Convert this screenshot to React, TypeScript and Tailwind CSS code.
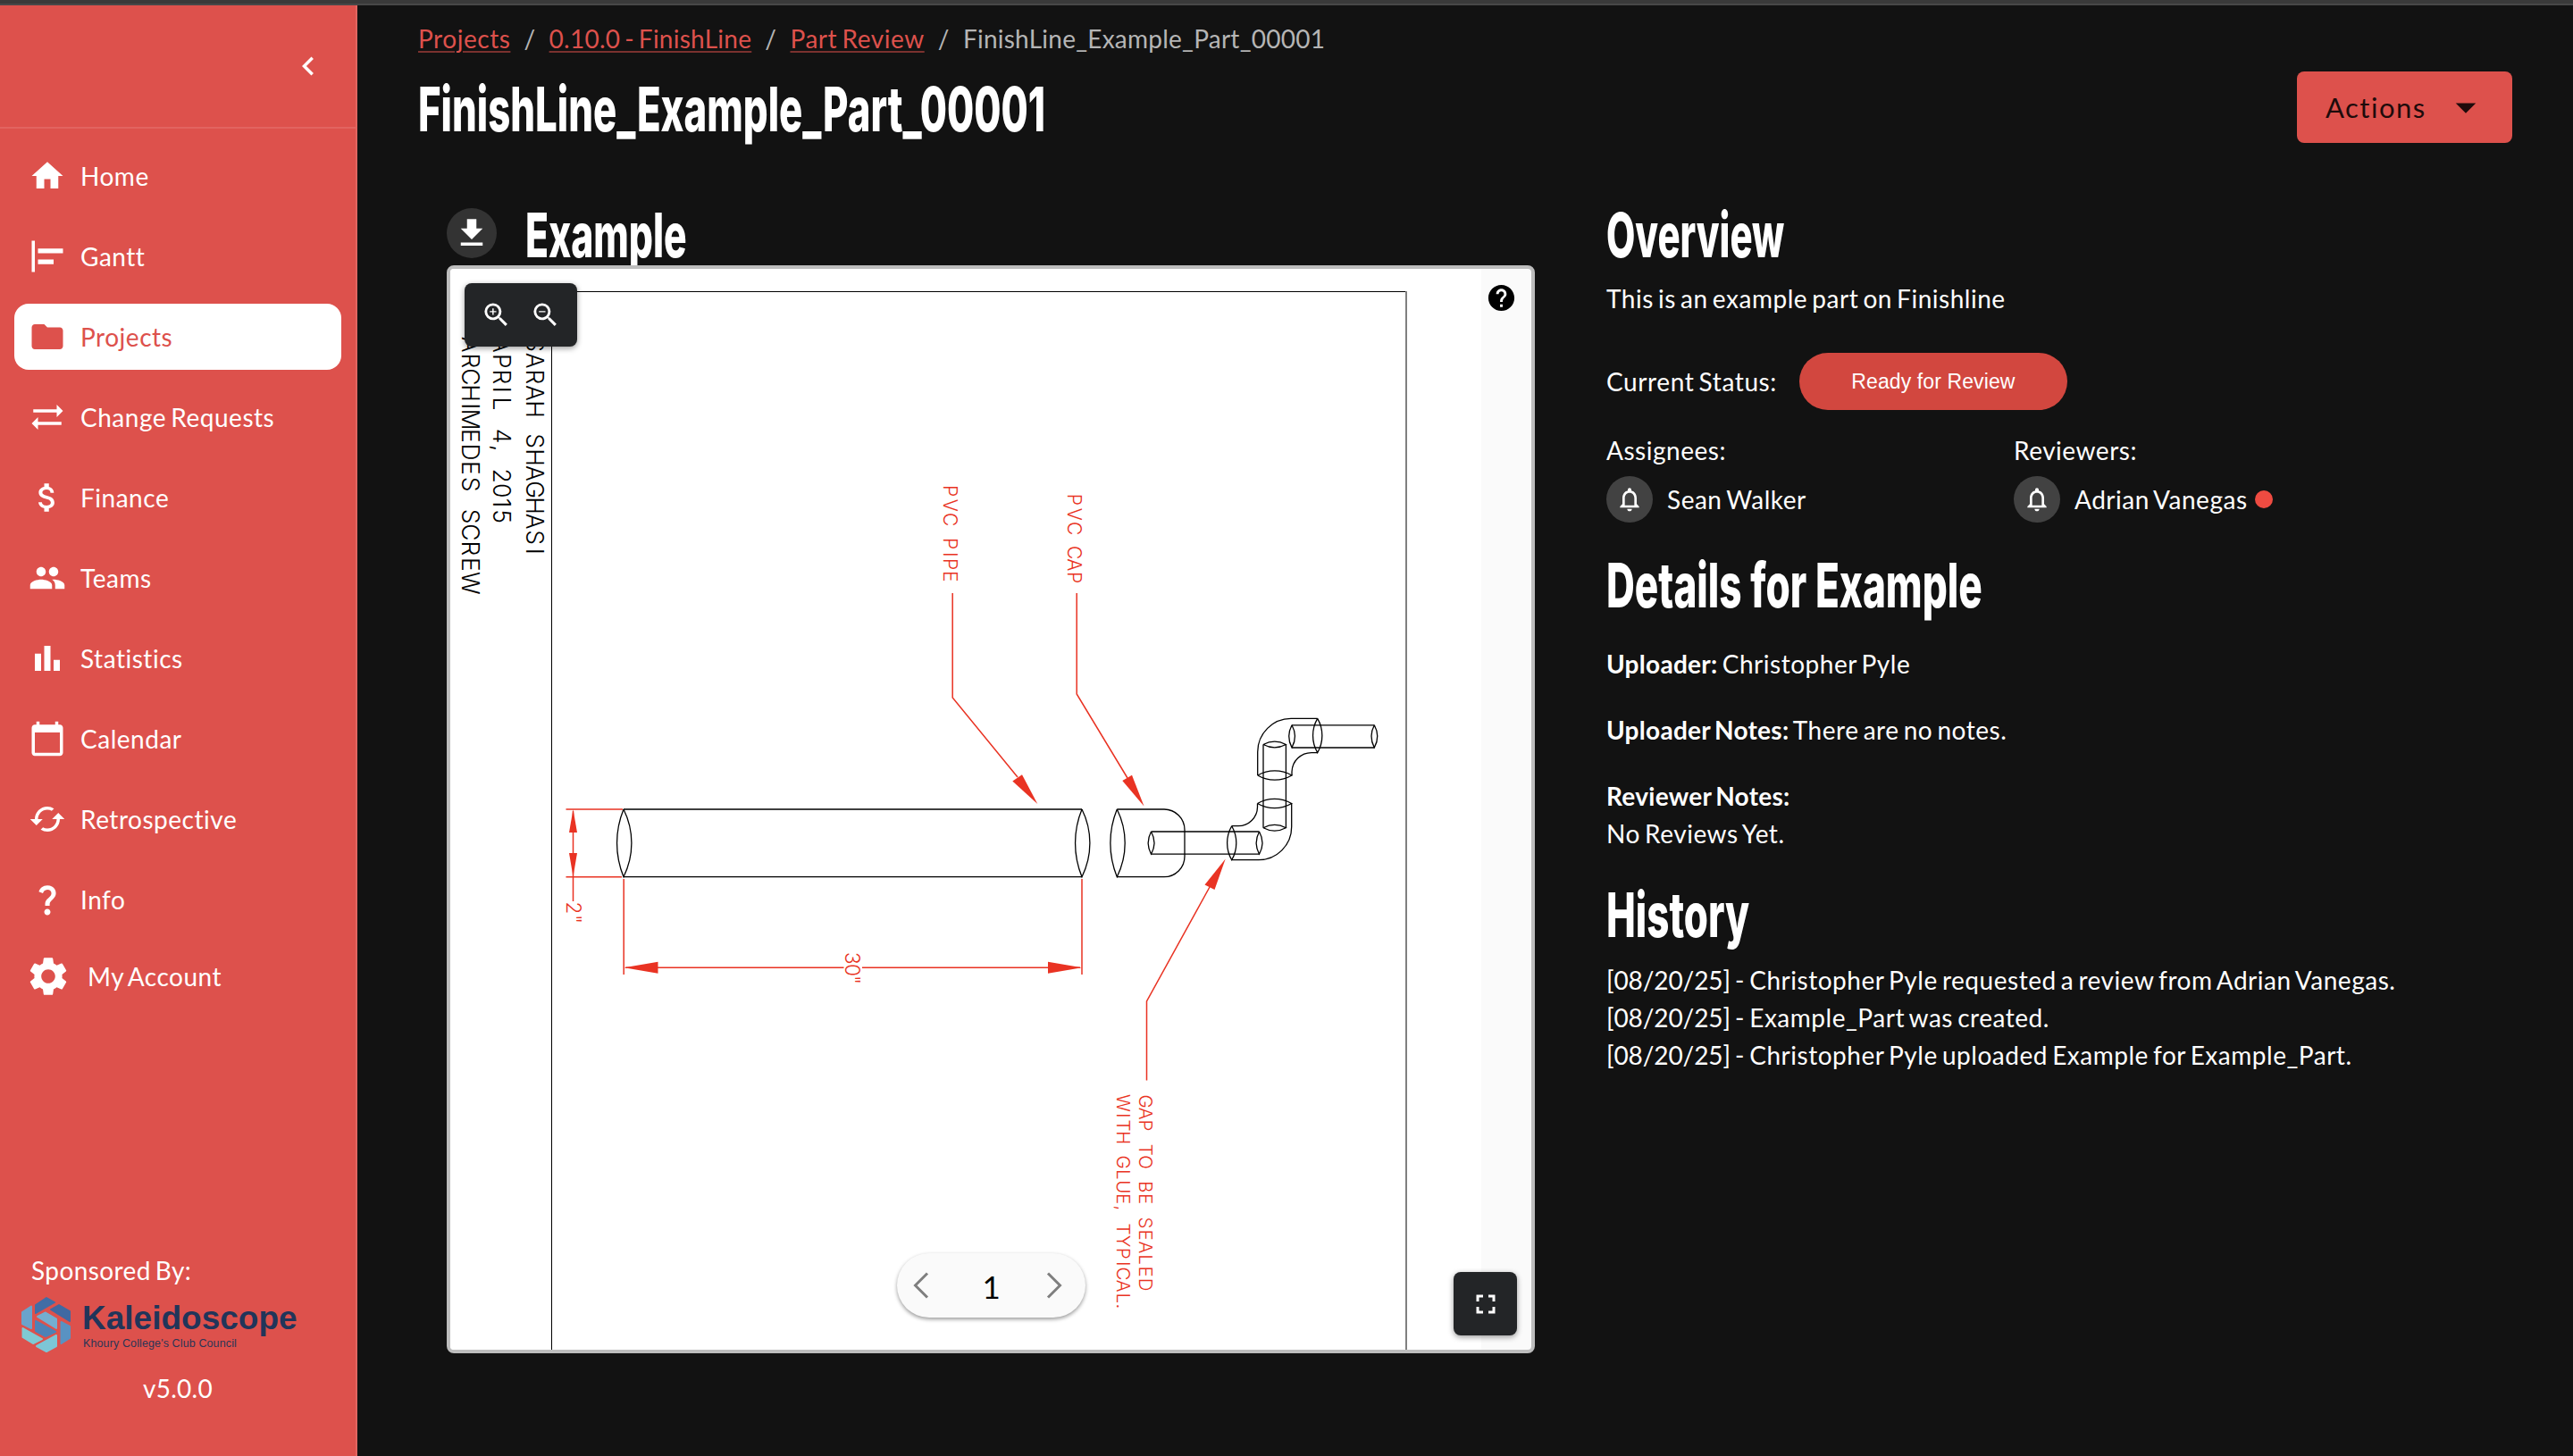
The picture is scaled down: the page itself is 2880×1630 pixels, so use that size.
import React from 'react';
import {
  MdAlignHorizontalLeft,
  MdArrowDropDown,
  MdAttachMoney,
  MdBarChart,
  MdCached,
  MdCalendarToday,
  MdChevronLeft,
  MdDownload,
  MdFolder,
  MdFullscreen,
  MdGroup,
  MdHelp,
  MdHome,
  MdNotificationsNone,
  MdQuestionMark,
  MdSettings,
  MdSyncAlt,
  MdZoomIn,
  MdZoomOut,
} from 'react-icons/md';
import type { IconType } from 'react-icons';

const navItems: { label: string; Icon: IconType; active?: boolean }[] = [
  { label: 'Home', Icon: MdHome },
  { label: 'Gantt', Icon: MdAlignHorizontalLeft },
  { label: 'Projects', Icon: MdFolder, active: true },
  { label: 'Change Requests', Icon: MdSyncAlt },
  { label: 'Finance', Icon: MdAttachMoney },
  { label: 'Teams', Icon: MdGroup },
  { label: 'Statistics', Icon: MdBarChart },
  { label: 'Calendar', Icon: MdCalendarToday },
  { label: 'Retrospective', Icon: MdCached },
  { label: 'Info', Icon: MdQuestionMark },
];

function KaleidoscopeLogo() {
  return (
    <div className="flex h-[72px] pl-[22px] tracking-normal whitespace-nowrap [word-spacing:0px]">
      <svg className="block h-[72px] w-[60px] shrink-0" viewBox="22 1446 60 72">
        <g strokeLinejoin="round" strokeWidth="2">
          <path d="M40 1460 L52 1452 L61 1457 L40 1469 Z" fill="#416da6" stroke="#416da6" />
          <path d="M57 1465 L66 1460 L78 1467 L78 1478 Z" fill="#4069a2" stroke="#4069a2" />
          <path d="M25 1468 L35 1461.500 L35 1486 L25 1481 Z" fill="#6ba3cb" stroke="#6ba3cb" />
          <path d="M42 1473 L51 1468.500 L63 1475.500 L63 1486 Z" fill="#74aed0" stroke="#74aed0" />
          <path d="M40 1478 L62 1490 L51 1495 L40 1489 Z" fill="#4d82b7" stroke="#4d82b7" />
          <path d="M68.500 1479 L78 1484 L78 1497 L68.500 1503 Z" fill="#5992c2" stroke="#5992c2" />
          <path d="M25.500 1486 L47 1498 L37 1503 L25.500 1496 Z" fill="#7fcad4" stroke="#7fcad4" />
          <path d="M41 1506 L63 1494 L63 1506 L52 1512 Z" fill="#7dc6d6" stroke="#7dc6d6" />
        </g>
      </svg>
      <div className="ml-[9px] flex flex-col pt-[8px] font-['Liberation_Sans',sans-serif]">
        <span className="pl-px text-[37px] leading-[42px] font-bold text-[#21355a]">Kaleidoscope</span>
        <span className="pl-[2px] text-[12.5px] leading-[14px] tracking-[0.12px] text-[#2b3556]">
          Khoury College's Club Council
        </span>
      </div>
    </div>
  );
}

function Sidebar() {
  return (
    <aside className="flex w-[400px] shrink-0 flex-col border-r-2 border-[#e26460] bg-[#dd514c] text-white">
      <div className="flex h-[138px] items-center justify-end border-b-2 border-[#e26460] pr-8">
        <MdChevronLeft className="size-[42px]" />
      </div>
      <nav className="flex flex-col gap-4 px-4 pt-4">
        {navItems.map(({ label, Icon, active }) => (
          <div
            key={label}
            className={
              active
                ? 'flex h-[74px] items-center gap-4 rounded-[16px] bg-white pl-4 text-[#dd514c]'
                : 'flex h-[74px] items-center gap-4 pl-4'
            }
          >
            <Icon className="size-[42px]" />
            <span>{label}</span>
          </div>
        ))}
        <div className="-mt-[4px] flex h-[74px] items-center gap-[18px] pl-3">
          <MdSettings className="size-[52px]" />
          <span>My Account</span>
        </div>
      </nav>
      <div className="mt-auto flex flex-col pb-[55px]">
        <div className="pl-[35px] tracking-[0.4px]">Sponsored By:</div>
        <div className="mt-1">
          <KaleidoscopeLogo />
        </div>
        <div className="mt-[14px] text-center tracking-[0.26px]">v5.0.0</div>
      </div>
    </aside>
  );
}

type Lettering = { text: string; x: number; ys: number[]; size: number; color: string };

const BLACK = '#000000';
const RED = '#e93323';

/* Drafting labels: one entry per line, with the centre of every letter along the sheet. */
const lettering: Lettering[] = [
  { text: 'SARAHSHAGHASI', x: 589, size: 26.5, color: BLACK, ys: [385.7, 403.7, 422, 440, 458, 493.7, 512, 530, 548, 566, 583.7, 601.7, 617.3] },
  { text: 'APRIL4,2015', x: 552, size: 26.5, color: BLACK, ys: [386, 404.3, 422, 436.3, 452, 488, 501.7, 532.7, 549.3, 563, 578] },
  { text: 'ARCHIMEDESSCREW', x: 517, size: 26.5, color: BLACK, ys: [385.7, 404, 422, 440, 454.7, 469.7, 488, 506, 524, 542, 578, 596, 614, 632, 652.7] },
  { text: 'PVCPIPE', x: 1055.7, size: 21, color: RED, ys: [549.7, 565.7, 581.7, 608.7, 620.7, 631.7, 645.3] },
  { text: 'PVCCAP', x: 1195, size: 21, color: RED, ys: [559.3, 575.7, 591.7, 618.7, 632.3, 646.7] },
  { text: 'GAPTOBESEALED', x: 1275, size: 20.5, color: RED, ys: [1233, 1246.7, 1260, 1287.3, 1301, 1328.7, 1342, 1369, 1382.7, 1396.3, 1410, 1423.7, 1438] },
  { text: 'WITHGLUE,TYPICAL.', x: 1250, size: 20.5, color: RED, ys: [1235, 1248.7, 1260, 1273.7, 1301, 1314.7, 1328.7, 1342, 1352.3, 1376, 1389.7, 1403.3, 1414.7, 1426, 1439.7, 1453.3, 1462.3] },
  { text: '2"', x: 633.5, size: 22.5, color: RED, ys: [1016.3, 1029] },
  { text: '30"', x: 946, size: 22.5, color: RED, ys: [1072.7, 1086, 1097] },
];

function Drawing() {
  return (
    <svg className="block h-[1210px] w-[1154px] bg-white" viewBox="504 301 1154 1210" fill="none">
      <path d="M617.500 1511 V326.500 H1574" stroke="#000" strokeWidth="1" />
      <path d="M1574 326 V1511" stroke="#808080" strokeWidth="2" />

      {lettering.map((l) => (
        <g key={l.text} transform={`translate(${l.x} 0) rotate(90)`}>
          <text
            x={l.ys.join(' ')}
            y="0"
            textAnchor="middle"
            fill={l.color}
            style={{ fontSize: l.size }}
            className="font-['Inter',sans-serif] font-light tracking-normal"
          >
            {l.text}
          </text>
        </g>
      ))}

      <g stroke="#000" strokeWidth="1.3">
        <path d="M698 906 H1211 M698 981.700 H1211" />
        <path d="M698 906 A100 100 0 0 0 698 981.700 A85 85 0 0 0 698 906" />
        <path d="M1211 906 A100 100 0 0 0 1211 981.700 A85 85 0 0 0 1211 906" />
        <path d="M1250.300 906 A100 100 0 0 0 1250.300 981.700 A85 85 0 0 0 1250.300 906" />
        <path d="M1250.300 906 H1303 A23 23 0 0 1 1326 929 V958.700 A23 23 0 0 1 1303 981.700 H1250.300" />
        <path d="M1288.500 931 H1409.500 M1288.500 956.200 H1409.500" />
        <path d="M1288.500 931 A27 27 0 0 0 1288.500 956.200 A26 26 0 0 0 1288.500 931" />
        <path d="M1409.500 931 A27 27 0 0 0 1409.500 956.200 A26 26 0 0 0 1409.500 931" />
        <path d="M1378.700 924.700 A38 38 0 0 0 1378.700 962.700 A38 38 0 0 0 1378.700 924.700" />
        <path d="M1378.700 924.700 H1386 A21.500 21.500 0 0 0 1407.500 903.500 V899.500" />
        <path d="M1445.700 899.500 V925.500 A37 37 0 0 1 1408.500 962.700 H1378.700" />
        <path d="M1407.500 899.500 A38 38 0 0 1 1445.700 899.500 A38 38 0 0 1 1407.500 899.500" />
        <path d="M1414 833.500 V926.700 M1439.400 833.500 V926.700" />
        <path d="M1414 833.500 A27 27 0 0 1 1439.400 833.500 A27 27 0 0 1 1414 833.500" />
        <path d="M1414 926.700 A27 27 0 0 1 1439.400 926.700 A27 27 0 0 1 1414 926.700" />
        <path d="M1407.700 868 A38 38 0 0 1 1446 868 A38 38 0 0 1 1407.700 868" />
        <path d="M1407.700 868 V841.700 A37.500 37.500 0 0 1 1445 804.400 H1474.700" />
        <path d="M1474.700 804.400 A38 38 0 0 0 1474.700 842.600 A38 38 0 0 0 1474.700 804.400" />
        <path d="M1474.700 842.600 H1468 A22 22 0 0 0 1446 864 V868" />
        <path d="M1446 811.800 H1538.300 M1446 837 H1538.300" />
        <path d="M1446 811.800 A27 27 0 0 0 1446 837 A26 26 0 0 0 1446 811.800" />
        <path d="M1538.300 811.800 A27 27 0 0 0 1538.300 837 A26 26 0 0 0 1538.300 811.800" />
      </g>

      <g stroke={RED} strokeWidth="1.5">
        <path d="M1066.200 664 V781 L1139 870" />
        <path d="M1205.200 664 V777 L1262 871" />
        <path d="M1283.500 1209.500 V1121 L1354 993" />
        <path d="M633.500 906 H697 M633.500 981.700 H696 M641.500 908 V1009" />
        <path d="M698.200 984 V1091 M1211 984 V1091" />
        <path d="M700 1083.300 H944.500 M965 1083.300 H1209" />
      </g>
      <g fill={RED}>
        <path d="M1161.300 900 L1133.300 874.500 L1144 867.300 Z" />
        <path d="M1280.500 902.500 L1256.300 874 L1267 867.800 Z" />
        <path d="M1371.700 961.500 L1348.500 990.500 L1359.500 996 Z" />
        <path d="M641.500 906 L637 932 H646 Z" />
        <path d="M641.500 981.500 L637 955 H646 Z" />
        <path d="M698.500 1083.300 L736.500 1076.800 V1089.800 Z" />
        <path d="M1211 1083.300 L1173 1076.800 V1089.800 Z" />
      </g>
    </svg>
  );
}

function Viewer() {
  return (
    <div className="relative z-10 h-[1218px] w-[1218px] overflow-hidden rounded-lg border-4 border-[#bdbdbd] bg-[#fafafa]">
      <Drawing />
      <div className="absolute top-4 left-4 flex h-[71px] w-[126px] items-center gap-5 rounded-lg bg-[#232527] pl-[18px] text-white shadow-[0_2px_6px_rgba(0,0,0,0.4)]">
        <MdZoomIn className="size-[35px]" />
        <MdZoomOut className="size-[35px]" />
      </div>
      <MdHelp className="absolute top-[15px] right-4 size-[35px] text-black" />
      <div className="absolute right-4 bottom-4 flex size-[71px] items-center justify-center rounded-lg bg-[#232527] text-white shadow-[0_2px_6px_rgba(0,0,0,0.4)]">
        <MdFullscreen className="size-[36px]" />
      </div>
      <div className="absolute bottom-9 left-[500px] flex h-[72px] w-[211px] items-center rounded-[36px] bg-[#fafafa] pr-[25px] pl-[17px] text-[35px] text-black shadow-[0_2px_4px_rgba(0,0,0,0.4)]">
        <svg className="h-[32px] w-[20px]" viewBox="0 0 20 32" fill="none" stroke="#7f7f7f" strokeWidth="3">
          <path d="M17 2.500 L3.500 16 L17 29.500" />
        </svg>
        <span className="flex-1 pt-[2px] pl-[9px] text-center">1</span>
        <svg className="h-[32px] w-[20px]" viewBox="0 0 20 32" fill="none" stroke="#7f7f7f" strokeWidth="3">
          <path d="M3 2.500 L16.500 16 L3 29.500" />
        </svg>
      </div>
    </div>
  );
}

function Heading({ children, stretch }: { children: string; stretch: string }) {
  return (
    <h2
      className={`origin-left font-['Inter',sans-serif] text-[69px] leading-[72px] font-extrabold tracking-normal whitespace-nowrap [word-spacing:0px] ${stretch}`}
    >
      {children}
    </h2>
  );
}

function Person({ role, name, dot }: { role: string; name: string; dot?: boolean }) {
  return (
    <div className="w-[456px]">
      <div>{role}</div>
      <div className="mt-2 flex h-[52px] items-center">
        <span className="flex size-[52px] items-center justify-center rounded-full bg-[#424242]">
          <MdNotificationsNone className="size-[32px]" />
        </span>
        <span className="ml-4">{name}</span>
        {dot && <span className="ml-2 size-5 rounded-full bg-[#ee4b41]" />}
      </div>
    </div>
  );
}

const crumbs = [
  { label: 'Projects', tracking: 'tracking-[0.54px]' },
  { label: '0.10.0 - FinishLine', tracking: 'tracking-[0.26px]' },
  { label: 'Part Review', tracking: 'tracking-[0.56px]' },
];

const history = [
  'Christopher Pyle requested a review from Adrian Vanegas.',
  'Example_Part was created.',
  'Christopher Pyle uploaded Example for Example_Part.',
];

export default function App() {
  return (
    <div className="flex h-[1630px] w-[2880px] flex-col overflow-hidden bg-[#121212] font-['Lato',sans-serif] text-[28px] leading-[42px] tracking-[0.52px] text-white [word-spacing:-2.5px]">
      <div className="h-[6px] shrink-0 border-b-2 border-[#484848] bg-[#3a3a3a]" />
      <div className="flex min-h-0 flex-1">
        <Sidebar />
        <main className="flex-1 pt-4 pr-[68px] pl-[68px]">
          <div className="flex text-[#b5b5b5]">
            {crumbs.map((c) => (
              <React.Fragment key={c.label}>
                <span
                  className={`text-[#dd514c] underline decoration-[#7b312f] decoration-2 underline-offset-[3px] ${c.tracking}`}
                >
                  {c.label}
                </span>
                <span className="mx-[15px]">/</span>
              </React.Fragment>
            ))}
            <span className="tracking-[0.24px]">FinishLine_Example_Part_00001</span>
          </div>

          <div className="mt-4 flex h-20 items-center justify-between">
            <div className="w-[800px] pt-[4px]">
              <Heading stretch="scale-x-[0.634]">FinishLine_Example_Part_00001</Heading>
            </div>
            <button className="flex h-20 w-[241px] items-center justify-between rounded-lg bg-[#dd514c] pr-[25px] pl-8 text-[31px] tracking-[1.5px] text-[#1e0b0b]">
              Actions
              <MdArrowDropDown className="size-[54px]" />
            </button>
          </div>

          <div className="mt-[65px] flex gap-20 pl-8">
            <section className="w-[1218px]">
              <div className="flex h-[72px] items-center">
                <span className="flex size-14 items-center justify-center rounded-full bg-[#333333]">
                  <MdDownload className="size-[42px]" />
                </span>
                <div className="ml-8 w-[300px] pt-[3px]">
                  <Heading stretch="scale-x-[0.618]">Example</Heading>
                </div>
              </div>
              <Viewer />
            </section>

            <section className="flex flex-1 flex-col pt-[2px]">
              <Heading stretch="scale-x-[0.607]">Overview</Heading>
              <div className="mt-[14px]">This is an example part on Finishline</div>
              <div className="mt-10 flex h-16 items-center">
                <span className="tracking-[0.6px]">Current Status:</span>
                <span className="ml-[25px] flex h-16 w-[300px] items-center justify-center rounded-full bg-[#d2473f] font-['Liberation_Sans',sans-serif] text-[23px] tracking-[0.1px] text-white [word-spacing:0px]">
                  Ready for Review
                </span>
              </div>
              <div className="mt-6 flex">
                <Person role="Assignees:" name="Sean Walker" />
                <Person role="Reviewers:" name="Adrian Vanegas" dot />
              </div>
              <div className="mt-[34px]">
                <Heading stretch="scale-x-[0.639]">Details for Example</Heading>
              </div>
              <div className="mt-[31px] flex flex-col gap-8">
                <p>
                  <b className="tracking-[0.28px]">Uploader:</b> Christopher Pyle
                </p>
                <p>
                  <b className="tracking-[0.28px]">Uploader Notes:</b> There are no notes.
                </p>
                <p>
                  <b className="tracking-[0.28px]">Reviewer Notes:</b>
                  <br />
                  No Reviews Yet.
                </p>
              </div>
              <div className="mt-[34px]">
                <Heading stretch="scale-x-[0.636]">History</Heading>
              </div>
              <div className="mt-4">
                {history.map((h) => (
                  <p key={h}>
                    <span className="tracking-[-0.1px]">[08/20/25]</span> - {h}
                  </p>
                ))}
              </div>
            </section>
          </div>
        </main>
      </div>
    </div>
  );
}
